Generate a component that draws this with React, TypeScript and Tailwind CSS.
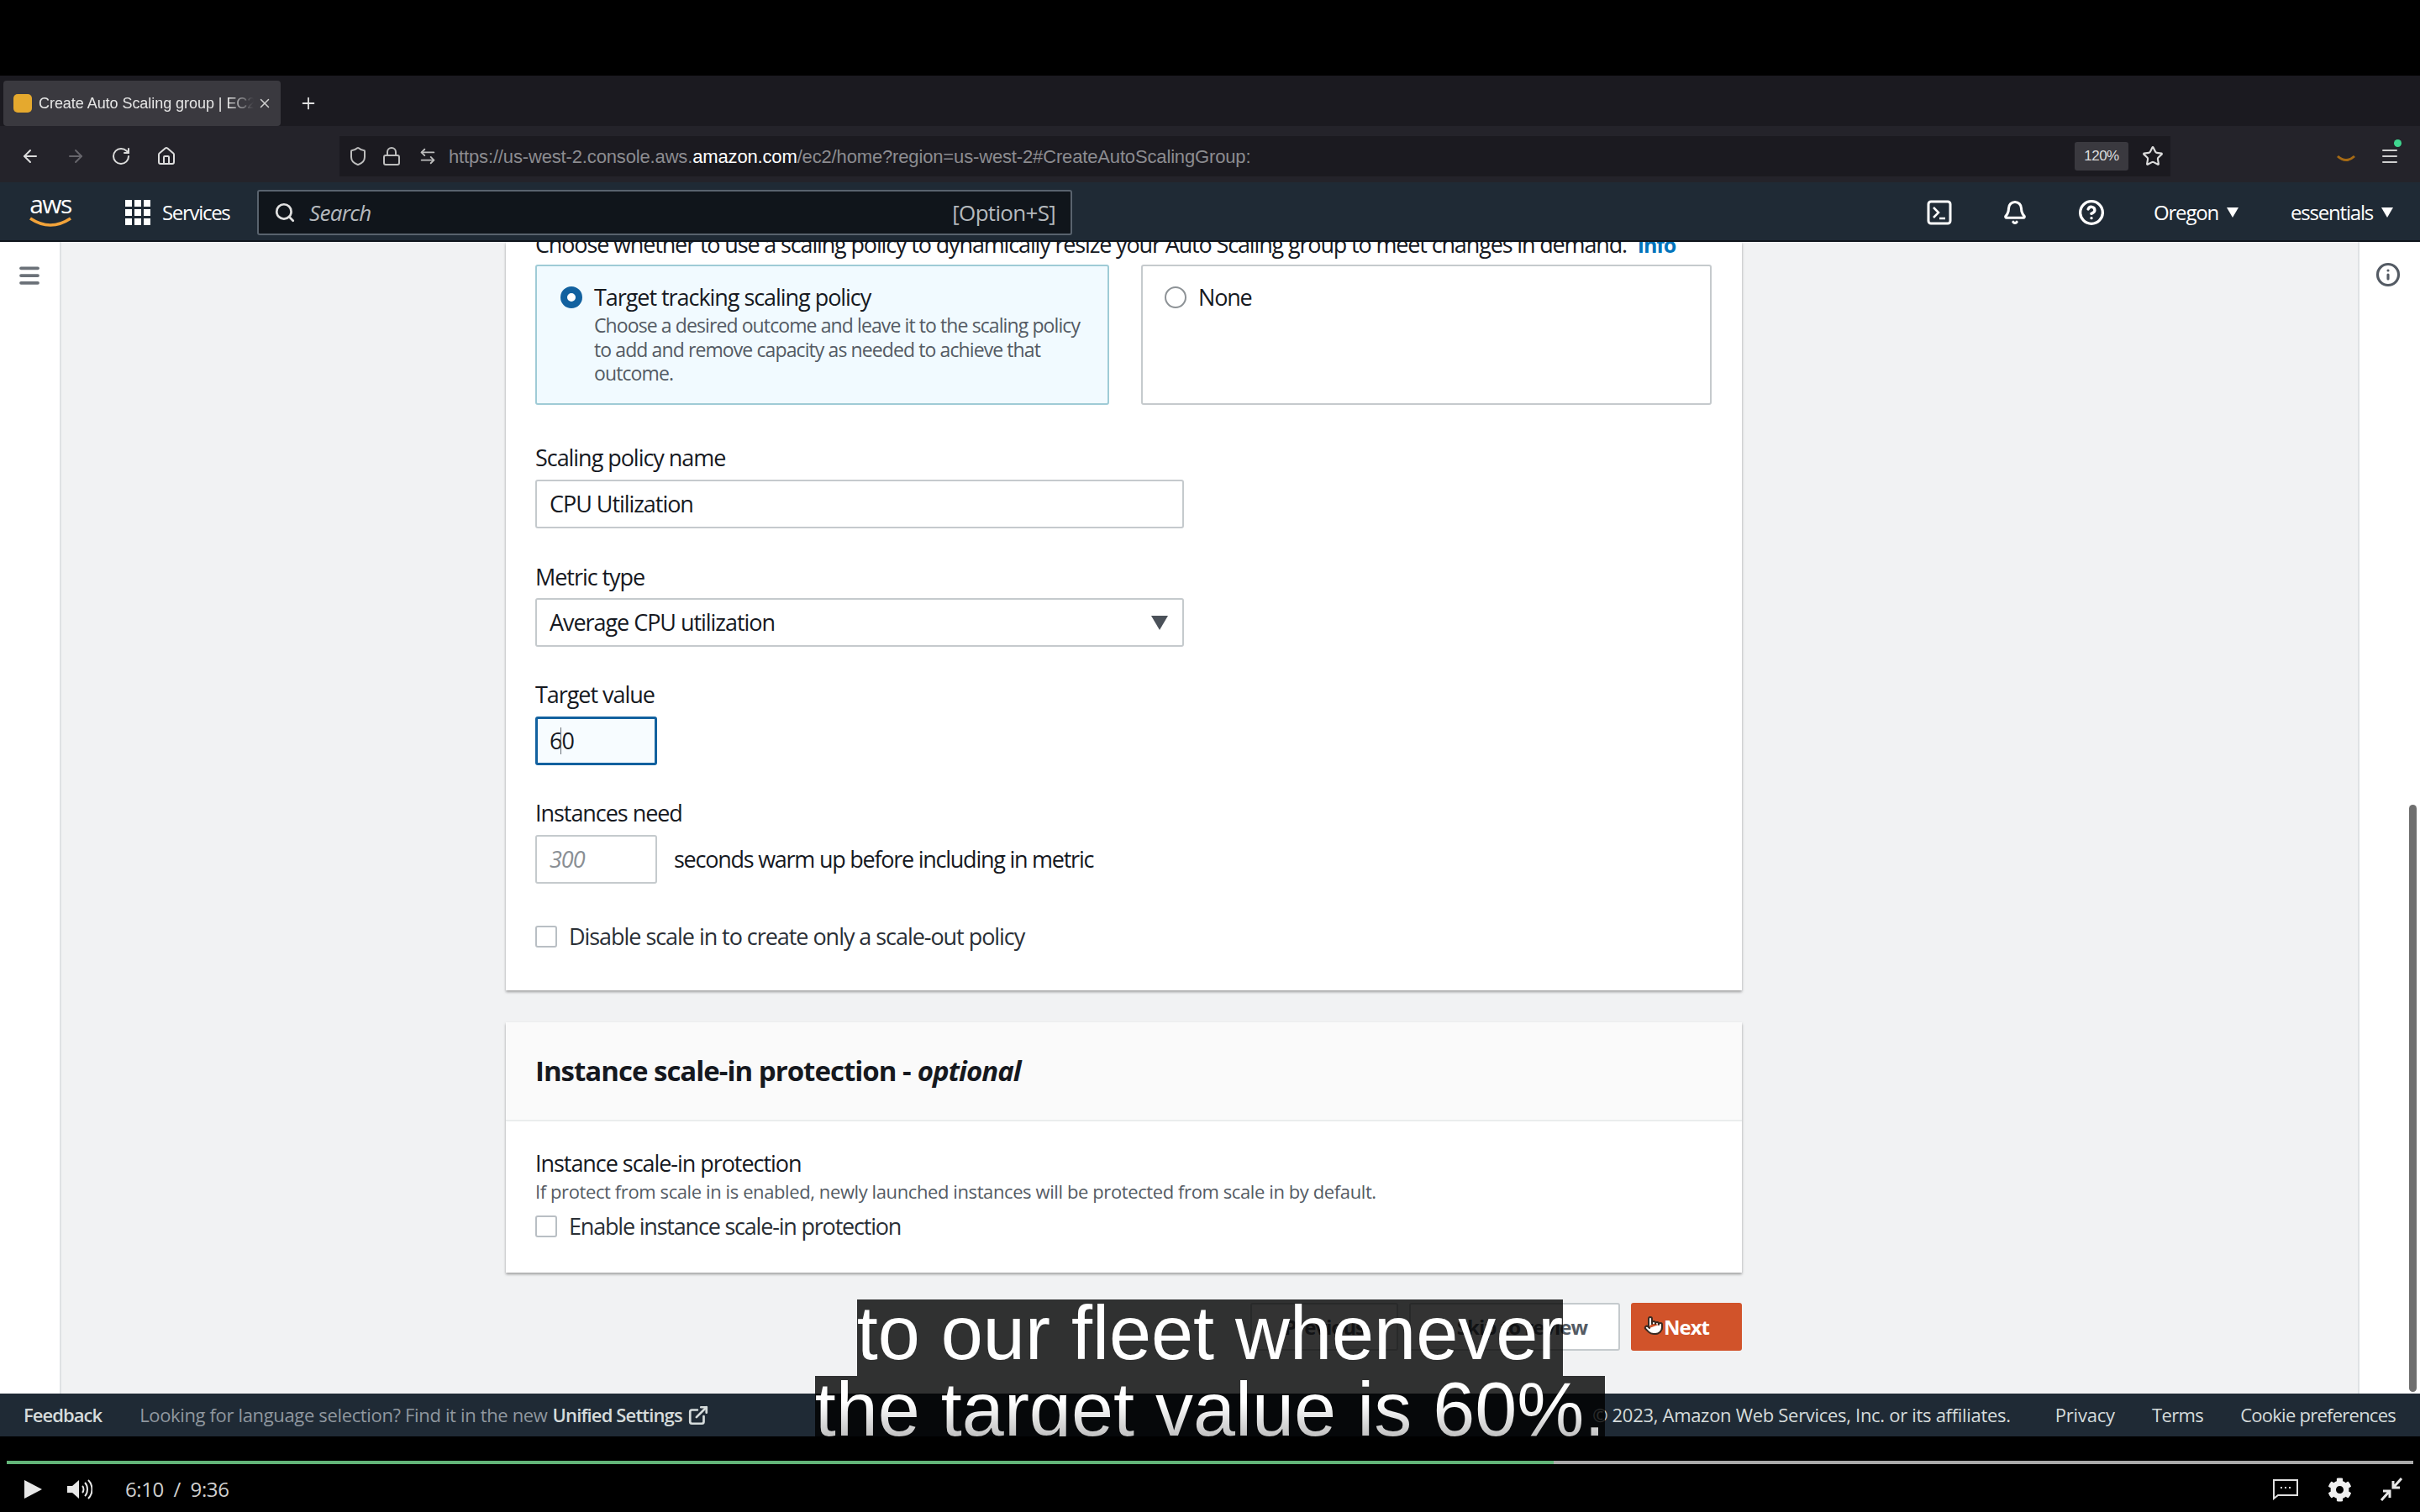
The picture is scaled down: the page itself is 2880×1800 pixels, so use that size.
import React from "react";
import { ArrowLeft, ArrowRight, RotateCw, Home, Shield, Lock, Star, Search, Plus, X, Menu, Info, Bell, CircleHelp, ExternalLink, Pointer, ArrowLeftRight } from "lucide-react";
import { FaCog } from "react-icons/fa";

const F = "[font-family:'Open_Sans','Noto_Sans',sans-serif]";

function Label({ children }: { children: React.ReactNode }) {
  return <div className="h-[28px] text-[27px] leading-[28px] tracking-[-1.05px] text-[#16191f]">{children}</div>;
}

function Box({ w, children, cls }: { w: string; children?: React.ReactNode; cls?: string }) {
  return <div className={`${w} h-[58px] flex items-center px-[15px] bg-white rounded-[3px] border-2 border-[#c5cacd] text-[27px] tracking-[-1.05px] text-[#16191f] ${cls ?? ""}`}>{children}</div>;
}

function Check({ children }: { children: React.ReactNode }) {
  return (
    <div className="flex items-center gap-[14px] text-[27px] leading-[26px] tracking-[-1.05px] text-[#2a2f36]">
      <div className="w-[26px] h-[26px] rounded-[3px] border-2 border-[#b9bfc4] bg-white" />
      <div>{children}</div>
    </div>
  );
}

function Caret() {
  return <svg width="14" height="12" viewBox="0 0 14 12" className="ml-[10px]"><polygon points="0,0 14,0 7,12" fill="#fff" /></svg>;
}

export default function App() {
  return (
    <div className={`w-[2880px] h-[1800px] bg-black overflow-hidden relative ${F}`}>
      <div className="h-[90px] bg-black" />
      {/* tab strip */}
      <div className="h-[60px] bg-[#1b1a20] flex items-start pt-[6px] pl-[4px]">
        <div className="w-[330px] h-[54px] bg-[#3a393f] rounded-[4px] flex items-center pl-[12px] pr-[10px] text-[#e6e6e6] text-[18px] tracking-[-0.05px] [font-family:'Liberation_Sans',sans-serif]">
          <div className="w-[22px] h-[22px] rounded-[5px] bg-[#e5a92e] shrink-0 mr-[8px]" />
          <span className="flex-1 whitespace-nowrap overflow-hidden [mask-image:linear-gradient(90deg,#000_88%,transparent)]">Create Auto Scaling group | EC2</span>
          <X className="w-[18px] h-[18px] ml-[4px] text-[#cfcfcf]" />
        </div>
        <Plus className="w-[22px] h-[22px] ml-[22px] mt-[16px] text-[#e0e0e0]" />
      </div>
      {/* toolbar */}
      <div className="h-[67px] bg-[#24232a] flex items-center pt-[5px]">
        <div className="w-[404px] flex items-center pl-[24px] gap-[30px] text-[#dcdcdc]">
          <ArrowLeft className="w-[24px] h-[24px]" />
          <ArrowRight className="w-[24px] h-[24px] text-[#66656b]" />
          <RotateCw className="w-[24px] h-[24px]" />
          <Home className="w-[24px] h-[24px]" />
        </div>
        <div className="w-[2179px] h-[48px] bg-[#1b1a20] flex items-center pl-[10px] pr-[8px] text-[#bdbdbd]">
          <Shield className="w-[24px] h-[24px]" />
          <Lock className="w-[24px] h-[24px] ml-[16px]" />
          <ArrowLeftRight className="w-[22px] h-[22px] ml-[20px]" />
          <div className="ml-[14px] flex-1 text-[22px] text-[#8c8c90] [font-family:'Liberation_Sans',sans-serif] tracking-[-0.15px]">
            https://us-west-2.console.aws.<span className="text-white">amazon.com</span>/ec2/home?region=us-west-2#CreateAutoScalingGroup:
          </div>
          <div className="w-[64px] h-[34px] bg-[#3a393f] rounded-[3px] flex items-center justify-center text-[17px] text-[#dcdcdc] [font-family:'Liberation_Sans',sans-serif] tracking-[-0.5px]">120%</div>
          <Star className="w-[26px] h-[26px] ml-[16px] text-[#dcdcdc]" />
        </div>
        <div className="flex-1 flex items-center justify-end pr-[24px] gap-[28px]">
          <svg width="24" height="12" viewBox="0 0 24 12" className="mt-[6px]"><path d="M2 3 Q12 12 22 3" stroke="#a66a14" strokeWidth="3" fill="none" /></svg>
          <div className="relative">
            <Menu className="w-[24px] h-[24px] text-[#cfcfcf]" />
            <div className="absolute -top-[8px] right-[-2px] w-[9px] h-[9px] rounded-full bg-[#3fd68f]" />
          </div>
        </div>
      </div>
      {/* aws header */}
      <div className="h-[71px] bg-[#1f2a35] flex items-center pt-[3px] text-white border-b-2 border-[#10161d]">
        <div className="w-[90px] pl-[30px] flex flex-col items-center">
          <svg width="60" height="50" viewBox="0 0 60 50">
            <text x="30" y="26" textAnchor="middle" fontSize="30" fill="#fff" fontFamily="Open Sans" letterSpacing="-1.5">aws</text>
            <path d="M6 32 Q30 48 54 32" stroke="#f2a33a" strokeWidth="3.5" fill="none" />
          </svg>
        </div>
        <div className="ml-[59px] grid grid-cols-3 gap-[3px]">
          {Array.from({ length: 9 }).map((_, i) => <div key={i} className="w-[8px] h-[8px] bg-white" />)}
        </div>
        <div className="ml-[14px] text-[24px] tracking-[-1.3px] w-[113px]">Services</div>
        <div className="w-[970px] h-[54px] bg-[#10151b] border-2 border-[#59636e] rounded-[3px] flex items-center px-[18px] text-[#b5b9bd] text-[26px] tracking-[-0.7px]">
          <Search className="w-[26px] h-[26px] text-[#e0e0e0]" strokeWidth={2.5} />
          <span className="ml-[16px] flex-1 italic">Search</span>
          <span>[Option+S]</span>
        </div>
        <div className="flex-1 flex items-center justify-end pr-[32px] text-[24px] tracking-[-1.2px]">
          <svg width="30" height="30" viewBox="0 0 30 30" fill="none" stroke="#fff" strokeWidth="3"><rect x="2" y="2" width="26" height="26" rx="3" /><path d="M8 9l6 6-6 6M15 22h7" strokeWidth="2.5" /></svg>
          <Bell className="w-[30px] h-[30px] ml-[60px]" strokeWidth={2.5} />
          <CircleHelp className="w-[32px] h-[32px] ml-[60px]" strokeWidth={2.5} />
          <span className="ml-[58px]">Oregon</span>
          <Caret />
          <span className="ml-[62px]">essentials</span>
          <Caret />
        </div>
      </div>
      {/* content */}
      <div className="h-[1371px] flex bg-[#f1f2f3] overflow-hidden relative">
        <div className="w-[73px] bg-white border-r-2 border-[#dfe2e4] pt-[25px] pl-[20px]">
          <Menu className="w-[30px] h-[30px] text-[#6b7178]" strokeWidth={3} />
        </div>
        <div className="w-[529px]" />
        <div className="w-[1471px] flex flex-col">
          <div className="bg-white h-[891px] shrink-0 shadow-[0_2px_3px_rgba(0,0,0,0.35)] px-[35px] overflow-hidden">
            <div className="h-[38px] -mt-[11px] text-[27px] leading-[28px] tracking-[-1.15px] text-[#16191f] whitespace-nowrap">
              Choose whether to use a scaling policy to dynamically resize your Auto Scaling group to meet changes in demand. <span className="text-[#0073bb] text-[25px] font-bold ml-[7px]">Info</span>
            </div>
            <div className="flex gap-[38px]">
              <div className="w-[683px] h-[167px] bg-[#f1faff] border-2 border-[#9fcbd6] rounded-[3px] flex pl-[28px] pt-[20px]">
                <div className="w-[26px] h-[26px] rounded-full border-[8px] border-[#12619f] bg-white mt-[4px] shrink-0" />
                <div className="ml-[14px]">
                  <div className="text-[27px] leading-[34px] tracking-[-1.05px] text-[#16191f]">Target tracking scaling policy</div>
                  <div className="text-[23px] leading-[28.5px] tracking-[-0.9px] text-[#545b64] mt-[2px] w-[590px]">Choose a desired outcome and leave it to the scaling policy to add and remove capacity as needed to achieve that outcome.</div>
                </div>
              </div>
              <div className="w-[679px] h-[167px] bg-white border-2 border-[#c5cacd] rounded-[3px] flex pl-[26px] pt-[20px]">
                <div className="w-[26px] h-[26px] rounded-full border-2 border-[#8d9296] bg-white mt-[4px] shrink-0" />
                <div className="ml-[14px] text-[27px] leading-[34px] tracking-[-1.2px] text-[#16191f]">None</div>
              </div>
            </div>
            <div className="mt-[49px]"><Label>Scaling policy name</Label></div>
            <Box w="w-[772px]" cls="mt-[12px]">CPU Utilization</Box>
            <div className="mt-[44px]"><Label>Metric type</Label></div>
            <Box w="w-[772px]" cls="mt-[11px] justify-between !pr-[17px]">
              <span>Average CPU utilization</span>
              <svg width="20" height="17" viewBox="0 0 20 17"><polygon points="0,0 20,0 10,17" fill="#4b5159" /></svg>
            </Box>
            <div className="mt-[43px]"><Label>Target value</Label></div>
            <Box w="w-[145px]" cls="mt-[12px] relative !border-[3px] !border-[#12619f] !bg-[#f7fcff] !pl-[14px]">
              60
              <div className="absolute left-[27px] top-[10px] h-[32px] w-px bg-[#6b7178]" />
            </Box>
            <div className="mt-[43px]"><Label>Instances need</Label></div>
            <div className="flex items-center mt-[12px] gap-[20px] text-[27px] tracking-[-1.25px] text-[#16191f]">
              <Box w="w-[145px]" cls="!text-[#8a8f94] italic">300</Box>
              <span>seconds warm up before including in metric</span>
            </div>
            <div className="mt-[50px]"><Check>Disable scale in to create only a scale-out policy</Check></div>
          </div>
          <div className="mt-[38px] bg-white h-[298px] shrink-0 shadow-[0_2px_3px_rgba(0,0,0,0.35)]">
            <div className="h-[118px] bg-[#fafafa] border-b-2 border-[#eaeded] px-[35px] flex items-center text-[33px] font-bold tracking-[-1px] text-[#16191f]">
              Instance scale-in protection - <em className="ml-[8px]">optional</em>
            </div>
            <div className="px-[35px] pt-[35px]">
              <div className="text-[27px] leading-[30px] tracking-[-1.05px] text-[#16191f]">Instance scale-in protection</div>
              <div className="text-[22px] leading-[26px] tracking-[-0.4px] text-[#545b64] mt-[5px]">If protect from scale in is enabled, newly launched instances will be protected from scale in by default.</div>
              <div className="mt-[16px]"><Check><span className="tracking-[-1.2px]">Enable instance scale-in protection</span></Check></div>
            </div>
          </div>
          <div className="mt-[36px] flex justify-end items-center gap-[13px] text-[24px] font-bold tracking-[-1px]">
            <div className="w-[176px] h-[57px] bg-white border-2 border-[#c5cacd] rounded-[3px] flex items-center justify-center text-[#545b64]">Previous</div>
            <div className="w-[251px] h-[57px] bg-white border-2 border-[#c5cacd] rounded-[3px] flex items-center justify-end pr-[37px] text-[#545b64]">Skip to review</div>
            <div className="relative w-[132px] h-[57px] bg-[#d1532a] rounded-[3px] flex items-center justify-center text-white">
              Next
              <Pointer className="absolute left-[15px] top-[14px] w-[24px] h-[26px] fill-white text-[#3a2a22]" />
            </div>
          </div>
        </div>
        <div className="w-[733px]" />
        <div className="absolute right-0 top-0 bottom-0 w-[74px] bg-white border-l-2 border-[#dfe2e4] flex flex-col items-center pt-[24px] pr-[4px]">
          <Info className="w-[30px] h-[30px] text-[#545b64]" strokeWidth={2.5} />
        </div>
        <div className="absolute right-[4px] top-[670px] bottom-[2px] w-[9px] rounded-full bg-[#6f6f6f]" />
      </div>
      {/* footer */}
      <div className="h-[51px] bg-[#1f2a35] flex items-center text-[22px] tracking-[-0.35px] text-[#d5dbdb]">
        <span className="ml-[28px] font-semibold tracking-[-0.95px]">Feedback</span>
        <span className="ml-[45px] text-[#8f979f]">Looking for language selection? Find it in the new</span>
        <span className="ml-[6px] font-semibold tracking-[-0.85px]">Unified Settings</span>
        <ExternalLink className="w-[26px] h-[26px] ml-[6px]" strokeWidth={2.5} />
        <span className="ml-auto tracking-[-0.3px]">© 2023, Amazon Web Services, Inc. or its affiliates.</span>
        <span className="ml-[53px] tracking-[-0.2px]">Privacy</span>
        <span className="ml-[44px] tracking-[-0.6px]">Terms</span>
        <span className="ml-[44px] mr-[29px] tracking-[-0.75px]">Cookie preferences</span>
      </div>
      {/* player */}
      <div className="h-[90px] bg-black">
        <div className="pt-[29px] px-[8px] flex">
          <div className="h-[4px] w-[1841px] bg-[#63b579]" />
          <div className="h-[4px] flex-1 bg-[#aaaaaa]" />
        </div>
        <div className="mt-[12px] h-[36px] flex items-center pl-[29px] pr-[20px] text-[#cfcfcf] text-[24px] tracking-[-0.4px]">
          <svg width="21" height="22" viewBox="0 0 21 22"><polygon points="0,0 21,11 0,22" fill="#e8e8e8" /></svg>
          <svg width="30" height="26" viewBox="0 0 30 26" className="ml-[30px]" fill="none">
            <polygon points="0,9 6,9 14,2 14,24 6,17 0,17" fill="#e8e8e8" />
            <path d="M18 9c2 2 2 6 0 8M21 5c4 4 4 12 0 16M25 2c6 6 6 16 0 22" stroke="#e8e8e8" strokeWidth="2" />
          </svg>
          <span className="ml-[39px] whitespace-pre">6:10  /  9:36</span>
          <svg width="32" height="26" viewBox="0 0 32 26" className="ml-auto" fill="none">
            <path d="M2 2h28v18H7l-5 4z" stroke="#e0e0e0" strokeWidth="2" />
            <path d="M10 11h2M15 11h2M20 11h2" stroke="#e0e0e0" strokeWidth="2" />
          </svg>
          <FaCog className="w-[29px] h-[29px] ml-[34px] text-[#f0f0f0]" />
          <svg width="28" height="28" viewBox="0 0 28 28" className="ml-[33px]" fill="none" stroke="#e8e8e8" strokeWidth="3">
            <path d="M26 1 L17 11M16 4v8h8" />
            <path d="M2 27 L11 17M4 16h8v8" />
          </svg>
        </div>
      </div>
      {/* captions */}
      <div className="absolute left-0 right-0 top-[1547px] flex flex-col items-center text-white text-[90px] leading-[91px] [font-family:'Liberation_Sans',sans-serif]">
        <div className="bg-black/80 h-[91px] whitespace-nowrap overflow-hidden"><div className="-mt-[5px]">to our fleet whenever</div></div>
        <div className="bg-black/80 h-[72px] whitespace-nowrap overflow-hidden">
          <div className="-mt-[5px] bg-[linear-gradient(180deg,#ffffff_40%,#c4c4c4_82%)] bg-clip-text text-transparent">the target value is 60%.</div>
        </div>
      </div>
    </div>
  );
}
